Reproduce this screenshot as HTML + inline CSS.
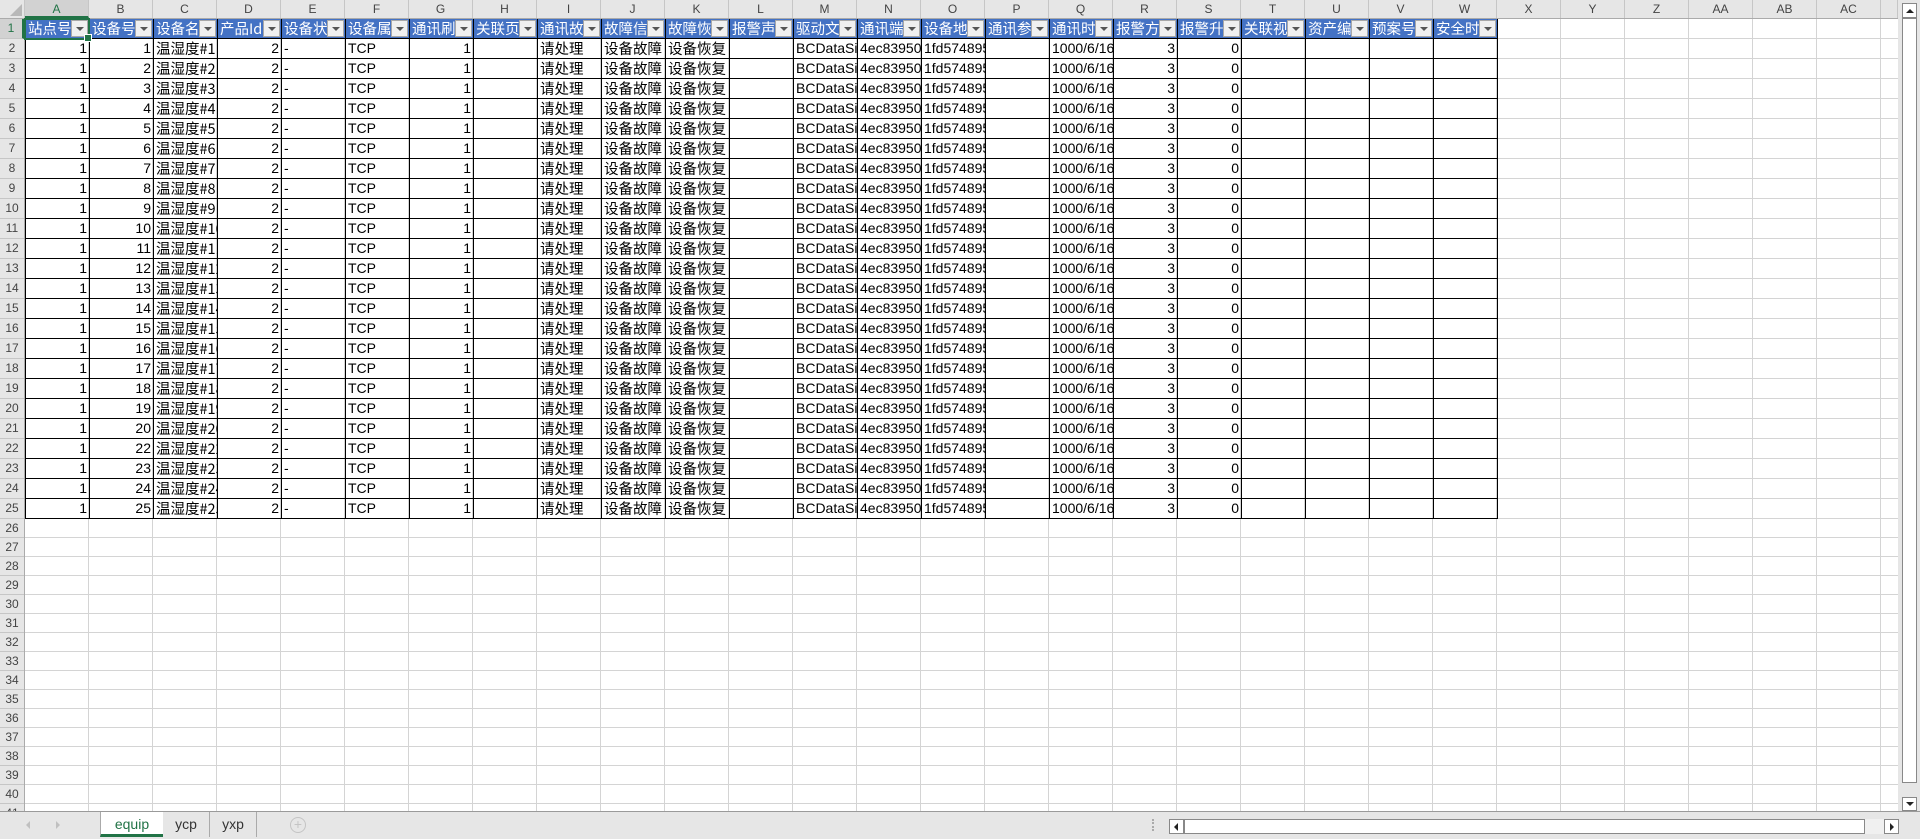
<!DOCTYPE html>
<html><head><meta charset="utf-8"><style>
*{margin:0;padding:0;box-sizing:border-box}
body{width:1920px;height:839px;overflow:hidden;background:#fff;font-family:"Liberation Sans","Noto Sans CJK SC",sans-serif;position:relative}
#grid{position:absolute;left:25px;top:19px;width:1873px;height:792px;
background-image:linear-gradient(to right,transparent 63px,#d4d4d4 63px);background-size:64px 100%;}
#hl{position:absolute;left:25px;top:519px;width:1873px;height:292px;
background-image:linear-gradient(to bottom,transparent 18px,#d4d4d4 18px);background-size:100% 19px;}
#hr{position:absolute;left:1497px;top:19px;width:401px;height:500px;
background-image:linear-gradient(to bottom,transparent 19px,#d4d4d4 19px);background-size:100% 20px;}
#colh{position:absolute;left:0;top:0;width:1898px;height:19px;background:#e6e6e6;border-bottom:1px solid #ababab}
#colh div{position:absolute;top:0;height:18px;width:64px;border-right:1px solid #c6c6c6;text-align:center;font-size:12px;line-height:18px;color:#444}
#rowh{position:absolute;left:0;top:19px;width:25px;height:792px;background:#e6e6e6;border-right:1px solid #ababab;overflow:hidden}
#rowh div{height:20px;border-bottom:1px solid #c6c6c6;font-size:12px;line-height:19px;text-align:center;color:#444}
#rowh div.s{height:19px;line-height:18px}
table{position:absolute;left:25px;top:19px;border-collapse:separate;border-spacing:0;table-layout:fixed;width:1473px;border-left:1px solid #000}
td{width:64px;height:20px;border-right:1px solid #000;border-bottom:1px solid #000;overflow:hidden;white-space:nowrap;font-size:14px;line-height:19px;padding:0 2px;color:#000}
tr:first-child td{border-top:0}
td.r{text-align:right}
td.c{font-family:"Noto Sans CJK SC",sans-serif;font-size:14.5px;line-height:19px}
th{width:64px;height:20px;background:#4472c4;color:#fff;font-weight:normal;text-align:left;font-family:"Noto Sans CJK SC",sans-serif;font-size:14.5px;line-height:19px;border-right:1px solid #000;border-bottom:1px solid #000;padding:0 0 0 2px;position:relative;overflow:hidden;white-space:nowrap}
th span{display:block;width:44px;overflow:hidden}
th i{position:absolute;right:1px;top:1px;width:17px;height:17px;background:#f0f0f0;border:1px solid #a8a8a8}
th i:after{content:"";position:absolute;left:4px;top:6px;border-left:4px solid transparent;border-right:4px solid transparent;border-top:4px solid #555}
#sel{position:absolute;left:24px;top:18px;width:66px;height:22px;border:2px solid #217346}
#sel:after{content:"";position:absolute;right:-4px;bottom:-4px;width:6px;height:6px;background:#217346;border:1px solid #fff}
#tabs{position:absolute;left:0;top:811px;width:1920px;height:28px;background:#e6e6e6;border-top:1px solid #9a9a9a}
.tab{position:absolute;top:0;height:25px;font-size:14px;line-height:24px;color:#333}
#vs{position:absolute;left:1898px;top:0;width:22px;height:811px;background:#e6e6e6}
</style></head><body>
<div id="grid"></div><div id="hl"></div><div id="hr"></div>
<div id="colh">
<div style="left:0;width:25px;background:#e6e6e6"><span style="position:absolute;right:2px;bottom:2px;border-left:12px solid transparent;border-bottom:12px solid #b8b8b8"></span></div>
<div style="left:25px;background:#d2d2d2;color:#217346;border-bottom:2px solid #217346">A</div><div style="left:89px">B</div><div style="left:153px">C</div><div style="left:217px">D</div><div style="left:281px">E</div><div style="left:345px">F</div><div style="left:409px">G</div><div style="left:473px">H</div><div style="left:537px">I</div><div style="left:601px">J</div><div style="left:665px">K</div><div style="left:729px">L</div><div style="left:793px">M</div><div style="left:857px">N</div><div style="left:921px">O</div><div style="left:985px">P</div><div style="left:1049px">Q</div><div style="left:1113px">R</div><div style="left:1177px">S</div><div style="left:1241px">T</div><div style="left:1305px">U</div><div style="left:1369px">V</div><div style="left:1433px">W</div><div style="left:1497px">X</div><div style="left:1561px">Y</div><div style="left:1625px">Z</div><div style="left:1689px">AA</div><div style="left:1753px">AB</div><div style="left:1817px">AC</div><div style="left:1881px;width:17px"></div>
</div>
<div id="rowh">
<div style="background:#d2d2d2;color:#217346;border-right:2px solid #217346">1</div><div>2</div><div>3</div><div>4</div><div>5</div><div>6</div><div>7</div><div>8</div><div>9</div><div>10</div><div>11</div><div>12</div><div>13</div><div>14</div><div>15</div><div>16</div><div>17</div><div>18</div><div>19</div><div>20</div><div>21</div><div>22</div><div>23</div><div>24</div><div>25</div><div class="s">26</div><div class="s">27</div><div class="s">28</div><div class="s">29</div><div class="s">30</div><div class="s">31</div><div class="s">32</div><div class="s">33</div><div class="s">34</div><div class="s">35</div><div class="s">36</div><div class="s">37</div><div class="s">38</div><div class="s">39</div><div class="s">40</div><div class="s">41</div>
</div>
<table>
<tr><th><span>站点号</span><i></i></th><th><span>设备号</span><i></i></th><th><span>设备名</span><i></i></th><th><span>产品Id</span><i></i></th><th><span>设备状态</span><i></i></th><th><span>设备属性</span><i></i></th><th><span>通讯刷新</span><i></i></th><th><span>关联页面</span><i></i></th><th><span>通讯故障</span><i></i></th><th><span>故障信息</span><i></i></th><th><span>故障恢复</span><i></i></th><th><span>报警声音</span><i></i></th><th><span>驱动文件</span><i></i></th><th><span>通讯端口</span><i></i></th><th><span>设备地址</span><i></i></th><th><span>通讯参数</span><i></i></th><th><span>通讯时间</span><i></i></th><th><span>报警方式</span><i></i></th><th><span>报警升级</span><i></i></th><th><span>关联视频</span><i></i></th><th><span>资产编号</span><i></i></th><th><span>预案号</span><i></i></th><th><span>安全时间</span><i></i></th></tr>
<tr><td class="r">1</td><td class="r">1</td><td class="c">温湿度#1</td><td class="r">2</td><td>-</td><td>TCP</td><td class="r">1</td><td></td><td class="c">请处理</td><td class="c">设备故障</td><td class="c">设备恢复</td><td></td><td>BCDataSim</td><td>4ec839503</td><td>1fd574895</td><td></td><td>1000/6/16</td><td class="r">3</td><td class="r">0</td><td></td><td></td><td></td><td></td></tr>
<tr><td class="r">1</td><td class="r">2</td><td class="c">温湿度#2</td><td class="r">2</td><td>-</td><td>TCP</td><td class="r">1</td><td></td><td class="c">请处理</td><td class="c">设备故障</td><td class="c">设备恢复</td><td></td><td>BCDataSim</td><td>4ec839503</td><td>1fd574895</td><td></td><td>1000/6/16</td><td class="r">3</td><td class="r">0</td><td></td><td></td><td></td><td></td></tr>
<tr><td class="r">1</td><td class="r">3</td><td class="c">温湿度#3</td><td class="r">2</td><td>-</td><td>TCP</td><td class="r">1</td><td></td><td class="c">请处理</td><td class="c">设备故障</td><td class="c">设备恢复</td><td></td><td>BCDataSim</td><td>4ec839503</td><td>1fd574895</td><td></td><td>1000/6/16</td><td class="r">3</td><td class="r">0</td><td></td><td></td><td></td><td></td></tr>
<tr><td class="r">1</td><td class="r">4</td><td class="c">温湿度#4</td><td class="r">2</td><td>-</td><td>TCP</td><td class="r">1</td><td></td><td class="c">请处理</td><td class="c">设备故障</td><td class="c">设备恢复</td><td></td><td>BCDataSim</td><td>4ec839503</td><td>1fd574895</td><td></td><td>1000/6/16</td><td class="r">3</td><td class="r">0</td><td></td><td></td><td></td><td></td></tr>
<tr><td class="r">1</td><td class="r">5</td><td class="c">温湿度#5</td><td class="r">2</td><td>-</td><td>TCP</td><td class="r">1</td><td></td><td class="c">请处理</td><td class="c">设备故障</td><td class="c">设备恢复</td><td></td><td>BCDataSim</td><td>4ec839503</td><td>1fd574895</td><td></td><td>1000/6/16</td><td class="r">3</td><td class="r">0</td><td></td><td></td><td></td><td></td></tr>
<tr><td class="r">1</td><td class="r">6</td><td class="c">温湿度#6</td><td class="r">2</td><td>-</td><td>TCP</td><td class="r">1</td><td></td><td class="c">请处理</td><td class="c">设备故障</td><td class="c">设备恢复</td><td></td><td>BCDataSim</td><td>4ec839503</td><td>1fd574895</td><td></td><td>1000/6/16</td><td class="r">3</td><td class="r">0</td><td></td><td></td><td></td><td></td></tr>
<tr><td class="r">1</td><td class="r">7</td><td class="c">温湿度#7</td><td class="r">2</td><td>-</td><td>TCP</td><td class="r">1</td><td></td><td class="c">请处理</td><td class="c">设备故障</td><td class="c">设备恢复</td><td></td><td>BCDataSim</td><td>4ec839503</td><td>1fd574895</td><td></td><td>1000/6/16</td><td class="r">3</td><td class="r">0</td><td></td><td></td><td></td><td></td></tr>
<tr><td class="r">1</td><td class="r">8</td><td class="c">温湿度#8</td><td class="r">2</td><td>-</td><td>TCP</td><td class="r">1</td><td></td><td class="c">请处理</td><td class="c">设备故障</td><td class="c">设备恢复</td><td></td><td>BCDataSim</td><td>4ec839503</td><td>1fd574895</td><td></td><td>1000/6/16</td><td class="r">3</td><td class="r">0</td><td></td><td></td><td></td><td></td></tr>
<tr><td class="r">1</td><td class="r">9</td><td class="c">温湿度#9</td><td class="r">2</td><td>-</td><td>TCP</td><td class="r">1</td><td></td><td class="c">请处理</td><td class="c">设备故障</td><td class="c">设备恢复</td><td></td><td>BCDataSim</td><td>4ec839503</td><td>1fd574895</td><td></td><td>1000/6/16</td><td class="r">3</td><td class="r">0</td><td></td><td></td><td></td><td></td></tr>
<tr><td class="r">1</td><td class="r">10</td><td class="c">温湿度#10</td><td class="r">2</td><td>-</td><td>TCP</td><td class="r">1</td><td></td><td class="c">请处理</td><td class="c">设备故障</td><td class="c">设备恢复</td><td></td><td>BCDataSim</td><td>4ec839503</td><td>1fd574895</td><td></td><td>1000/6/16</td><td class="r">3</td><td class="r">0</td><td></td><td></td><td></td><td></td></tr>
<tr><td class="r">1</td><td class="r">11</td><td class="c">温湿度#11</td><td class="r">2</td><td>-</td><td>TCP</td><td class="r">1</td><td></td><td class="c">请处理</td><td class="c">设备故障</td><td class="c">设备恢复</td><td></td><td>BCDataSim</td><td>4ec839503</td><td>1fd574895</td><td></td><td>1000/6/16</td><td class="r">3</td><td class="r">0</td><td></td><td></td><td></td><td></td></tr>
<tr><td class="r">1</td><td class="r">12</td><td class="c">温湿度#12</td><td class="r">2</td><td>-</td><td>TCP</td><td class="r">1</td><td></td><td class="c">请处理</td><td class="c">设备故障</td><td class="c">设备恢复</td><td></td><td>BCDataSim</td><td>4ec839503</td><td>1fd574895</td><td></td><td>1000/6/16</td><td class="r">3</td><td class="r">0</td><td></td><td></td><td></td><td></td></tr>
<tr><td class="r">1</td><td class="r">13</td><td class="c">温湿度#13</td><td class="r">2</td><td>-</td><td>TCP</td><td class="r">1</td><td></td><td class="c">请处理</td><td class="c">设备故障</td><td class="c">设备恢复</td><td></td><td>BCDataSim</td><td>4ec839503</td><td>1fd574895</td><td></td><td>1000/6/16</td><td class="r">3</td><td class="r">0</td><td></td><td></td><td></td><td></td></tr>
<tr><td class="r">1</td><td class="r">14</td><td class="c">温湿度#14</td><td class="r">2</td><td>-</td><td>TCP</td><td class="r">1</td><td></td><td class="c">请处理</td><td class="c">设备故障</td><td class="c">设备恢复</td><td></td><td>BCDataSim</td><td>4ec839503</td><td>1fd574895</td><td></td><td>1000/6/16</td><td class="r">3</td><td class="r">0</td><td></td><td></td><td></td><td></td></tr>
<tr><td class="r">1</td><td class="r">15</td><td class="c">温湿度#15</td><td class="r">2</td><td>-</td><td>TCP</td><td class="r">1</td><td></td><td class="c">请处理</td><td class="c">设备故障</td><td class="c">设备恢复</td><td></td><td>BCDataSim</td><td>4ec839503</td><td>1fd574895</td><td></td><td>1000/6/16</td><td class="r">3</td><td class="r">0</td><td></td><td></td><td></td><td></td></tr>
<tr><td class="r">1</td><td class="r">16</td><td class="c">温湿度#16</td><td class="r">2</td><td>-</td><td>TCP</td><td class="r">1</td><td></td><td class="c">请处理</td><td class="c">设备故障</td><td class="c">设备恢复</td><td></td><td>BCDataSim</td><td>4ec839503</td><td>1fd574895</td><td></td><td>1000/6/16</td><td class="r">3</td><td class="r">0</td><td></td><td></td><td></td><td></td></tr>
<tr><td class="r">1</td><td class="r">17</td><td class="c">温湿度#17</td><td class="r">2</td><td>-</td><td>TCP</td><td class="r">1</td><td></td><td class="c">请处理</td><td class="c">设备故障</td><td class="c">设备恢复</td><td></td><td>BCDataSim</td><td>4ec839503</td><td>1fd574895</td><td></td><td>1000/6/16</td><td class="r">3</td><td class="r">0</td><td></td><td></td><td></td><td></td></tr>
<tr><td class="r">1</td><td class="r">18</td><td class="c">温湿度#18</td><td class="r">2</td><td>-</td><td>TCP</td><td class="r">1</td><td></td><td class="c">请处理</td><td class="c">设备故障</td><td class="c">设备恢复</td><td></td><td>BCDataSim</td><td>4ec839503</td><td>1fd574895</td><td></td><td>1000/6/16</td><td class="r">3</td><td class="r">0</td><td></td><td></td><td></td><td></td></tr>
<tr><td class="r">1</td><td class="r">19</td><td class="c">温湿度#19</td><td class="r">2</td><td>-</td><td>TCP</td><td class="r">1</td><td></td><td class="c">请处理</td><td class="c">设备故障</td><td class="c">设备恢复</td><td></td><td>BCDataSim</td><td>4ec839503</td><td>1fd574895</td><td></td><td>1000/6/16</td><td class="r">3</td><td class="r">0</td><td></td><td></td><td></td><td></td></tr>
<tr><td class="r">1</td><td class="r">20</td><td class="c">温湿度#20</td><td class="r">2</td><td>-</td><td>TCP</td><td class="r">1</td><td></td><td class="c">请处理</td><td class="c">设备故障</td><td class="c">设备恢复</td><td></td><td>BCDataSim</td><td>4ec839503</td><td>1fd574895</td><td></td><td>1000/6/16</td><td class="r">3</td><td class="r">0</td><td></td><td></td><td></td><td></td></tr>
<tr><td class="r">1</td><td class="r">22</td><td class="c">温湿度#22</td><td class="r">2</td><td>-</td><td>TCP</td><td class="r">1</td><td></td><td class="c">请处理</td><td class="c">设备故障</td><td class="c">设备恢复</td><td></td><td>BCDataSim</td><td>4ec839503</td><td>1fd574895</td><td></td><td>1000/6/16</td><td class="r">3</td><td class="r">0</td><td></td><td></td><td></td><td></td></tr>
<tr><td class="r">1</td><td class="r">23</td><td class="c">温湿度#23</td><td class="r">2</td><td>-</td><td>TCP</td><td class="r">1</td><td></td><td class="c">请处理</td><td class="c">设备故障</td><td class="c">设备恢复</td><td></td><td>BCDataSim</td><td>4ec839503</td><td>1fd574895</td><td></td><td>1000/6/16</td><td class="r">3</td><td class="r">0</td><td></td><td></td><td></td><td></td></tr>
<tr><td class="r">1</td><td class="r">24</td><td class="c">温湿度#24</td><td class="r">2</td><td>-</td><td>TCP</td><td class="r">1</td><td></td><td class="c">请处理</td><td class="c">设备故障</td><td class="c">设备恢复</td><td></td><td>BCDataSim</td><td>4ec839503</td><td>1fd574895</td><td></td><td>1000/6/16</td><td class="r">3</td><td class="r">0</td><td></td><td></td><td></td><td></td></tr>
<tr><td class="r">1</td><td class="r">25</td><td class="c">温湿度#25</td><td class="r">2</td><td>-</td><td>TCP</td><td class="r">1</td><td></td><td class="c">请处理</td><td class="c">设备故障</td><td class="c">设备恢复</td><td></td><td>BCDataSim</td><td>4ec839503</td><td>1fd574895</td><td></td><td>1000/6/16</td><td class="r">3</td><td class="r">0</td><td></td><td></td><td></td><td></td></tr>
</table>
<div id="sel"></div>
<div id="vs">
<div style="position:absolute;left:4px;top:3px;width:15px;height:15px;background:#fff;border:1px solid #888"><span style="position:absolute;left:3px;top:5px;border-left:4px solid transparent;border-right:4px solid transparent;border-bottom:4px solid #222"></span></div>
<div style="position:absolute;left:4px;top:18px;width:15px;height:765px;background:#fff;border:1px solid #888"></div>
<div style="position:absolute;left:4px;top:797px;width:15px;height:14px;background:#fff;border:1px solid #888"><span style="position:absolute;left:3px;top:4px;border-left:4px solid transparent;border-right:4px solid transparent;border-top:4px solid #222"></span></div>
</div>
<div id="tabs">
<span style="position:absolute;left:26px;top:9px;border-top:4px solid transparent;border-bottom:4px solid transparent;border-right:4px solid #c0c0c0"></span>
<span style="position:absolute;left:56px;top:9px;border-top:4px solid transparent;border-bottom:4px solid transparent;border-left:4px solid #c0c0c0"></span>
<div class="tab" style="left:100px;width:63px;background:#fff;color:#217346;text-align:center;border-left:1px solid #aaa;border-bottom:3px solid #217346">equip</div>
<div class="tab" style="left:163px;width:47px;text-align:center;border-right:1px solid #aaa">ycp</div>
<div class="tab" style="left:210px;width:47px;text-align:center;border-right:1px solid #aaa">yxp</div>
<div style="position:absolute;left:290px;top:5px;width:16px;height:16px;border:1px solid #c4c4c4;border-radius:50%;color:#c4c4c4;font-size:14px;line-height:13px;text-align:center">+</div>
<div style="position:absolute;left:1152px;top:7px;width:3px;height:12px;border-left:2px dotted #aaa"></div>
<div style="position:absolute;left:1169px;top:7px;width:15px;height:15px;background:#fff;border:1px solid #888"><span style="position:absolute;left:4px;top:3px;border-top:4px solid transparent;border-bottom:4px solid transparent;border-right:4px solid #222"></span></div>
<div style="position:absolute;left:1184px;top:7px;width:681px;height:15px;background:#fff;border:1px solid #888"></div>
<div style="position:absolute;left:1865px;top:7px;width:19px;height:15px;background:#f0f0f0"></div>
<div style="position:absolute;left:1884px;top:7px;width:15px;height:15px;background:#fff;border:1px solid #888"><span style="position:absolute;left:5px;top:3px;border-top:4px solid transparent;border-bottom:4px solid transparent;border-left:4px solid #222"></span></div>
</div>
</body></html>
